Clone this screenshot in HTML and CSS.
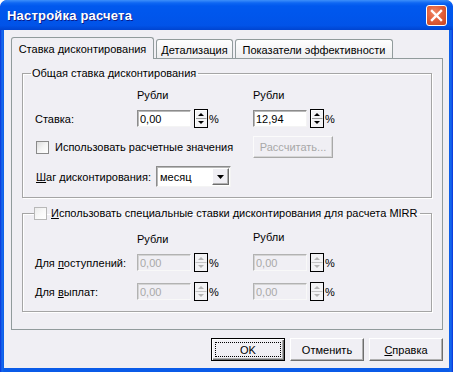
FILE: index.html
```html
<!DOCTYPE html>
<html lang="ru">
<head>
<meta charset="utf-8">
<title>Настройка расчета</title>
<link rel="stylesheet" href="styles.css">
</head>
<body>
<div class="window">
  <div class="titlebar">
    <span class="title">Настройка расчета</span>
    <span class="close">
      <svg width="13" height="13" viewBox="0 0 13 13"><path d="M2 2 L11 11 M11 2 L2 11" stroke="#fff" stroke-width="2.4" stroke-linecap="square"/></svg>
    </span>
  </div>
  <div class="client">
    <div class="tabs">
      <div class="tab active tab-a">Ставка дисконтирования</div>
      <div class="tab tab-b">Детализация</div>
      <div class="tab tab-c">Показатели эффективности</div>
    </div>
    <div class="panel">
      <fieldset class="group g1">
        <legend>Общая ставка дисконтирования</legend>
        <div class="gbody">
          <div class="row r-head">
            <span class="lbl"></span>
            <span class="cell">Рубли</span>
            <span class="cell">Рубли</span>
          </div>
          <div class="row r-field">
            <span class="lbl">Ставка:</span>
            <span class="cell">
              <input class="edit" type="text" value="0,00">
              <span class="spin"><svg width="14" height="19" viewBox="0 0 14 19"><rect x="0.5" y="0.5" width="13" height="18" fill="#f3f3f5" stroke="#000"/><path d="M1.5 9.5 H12.5" stroke="#9a9a9a"/><path d="M1.5 1.5 H12.5 M1.5 1.5 V17.5" stroke="#fff"/><path d="M4 7 L10 7 L7 4 Z" fill="#000"/><path d="M4 12 L10 12 L7 15 Z" fill="#000"/></svg></span>
              <span class="pct">%</span>
            </span>
            <span class="cell">
              <input class="edit" type="text" value="12,94">
              <span class="spin"><svg width="14" height="19" viewBox="0 0 14 19"><rect x="0.5" y="0.5" width="13" height="18" fill="#f3f3f5" stroke="#000"/><path d="M1.5 9.5 H12.5" stroke="#9a9a9a"/><path d="M1.5 1.5 H12.5 M1.5 1.5 V17.5" stroke="#fff"/><path d="M4 7 L10 7 L7 4 Z" fill="#000"/><path d="M4 12 L10 12 L7 15 Z" fill="#000"/></svg></span>
              <span class="pct">%</span>
            </span>
          </div>
          <div class="row r-check">
            <span class="checkwrap"><span class="chk"></span><span>Использовать расчетные значения</span></span>
            <span class="btn disabled calc">Рассчитать...</span>
          </div>
          <div class="row r-combo">
            <span class="lbl lbl-wide"><u>Ш</u>аг дисконтирования:</span>
            <span class="combo"><span class="combo-text">месяц</span><span class="combo-btn"><svg width="15" height="17" viewBox="0 0 15 17"><path d="M4 7 L11 7 L7.5 11 Z" fill="#000"/></svg></span></span>
          </div>
        </div>
      </fieldset>
      <fieldset class="group g2">
        <legend><span class="chk chk-light"></span><span><u>И</u>спользовать специальные ставки дисконтирования для расчета MIRR</span></legend>
        <div class="gbody">
          <div class="row r-head2">
            <span class="lbl"></span>
            <span class="cell">Рубли</span>
            <span class="cell up">Рубли</span>
          </div>
          <div class="row r-field2">
            <span class="lbl">Для <u>п</u>оступлений:</span>
            <span class="cell">
              <input class="edit" type="text" value="0,00" disabled>
              <span class="spin"><svg width="14" height="19" viewBox="0 0 14 19"><rect x="0.5" y="0.5" width="13" height="18" fill="#f3f3f5" stroke="#000"/><path d="M1.5 9.5 H12.5" stroke="#c4c4c4"/><path d="M4 7 L10 7 L7 4 Z" fill="#b5b5b5"/><path d="M4 12 L10 12 L7 15 Z" fill="#b5b5b5"/></svg></span>
              <span class="pct">%</span>
            </span>
            <span class="cell">
              <input class="edit" type="text" value="0,00" disabled>
              <span class="spin"><svg width="14" height="19" viewBox="0 0 14 19"><rect x="0.5" y="0.5" width="13" height="18" fill="#f3f3f5" stroke="#000"/><path d="M1.5 9.5 H12.5" stroke="#c4c4c4"/><path d="M4 7 L10 7 L7 4 Z" fill="#b5b5b5"/><path d="M4 12 L10 12 L7 15 Z" fill="#b5b5b5"/></svg></span>
              <span class="pct">%</span>
            </span>
          </div>
          <div class="row r-field3">
            <span class="lbl">Для <u>в</u>ыплат:</span>
            <span class="cell">
              <input class="edit" type="text" value="0,00" disabled>
              <span class="spin"><svg width="14" height="19" viewBox="0 0 14 19"><rect x="0.5" y="0.5" width="13" height="18" fill="#f3f3f5" stroke="#000"/><path d="M1.5 9.5 H12.5" stroke="#c4c4c4"/><path d="M4 7 L10 7 L7 4 Z" fill="#b5b5b5"/><path d="M4 12 L10 12 L7 15 Z" fill="#b5b5b5"/></svg></span>
              <span class="pct">%</span>
            </span>
            <span class="cell">
              <input class="edit" type="text" value="0,00" disabled>
              <span class="spin"><svg width="14" height="19" viewBox="0 0 14 19"><rect x="0.5" y="0.5" width="13" height="18" fill="#f3f3f5" stroke="#000"/><path d="M1.5 9.5 H12.5" stroke="#c4c4c4"/><path d="M4 7 L10 7 L7 4 Z" fill="#b5b5b5"/><path d="M4 12 L10 12 L7 15 Z" fill="#b5b5b5"/></svg></span>
              <span class="pct">%</span>
            </span>
          </div>
        </div>
      </fieldset>
    </div>
    <div class="buttons">
      <span class="btn default">OK</span>
      <span class="btn">Отменить</span>
      <span class="btn"><u>С</u>правка</span>
    </div>
  </div>
</div>
</body>
</html>
```

FILE: styles.css
```css
* { box-sizing: border-box; }
html, body { margin: 0; padding: 0; }
body {
  width: 453px;
  height: 372px;
  overflow: hidden;
  background: #ffffff;
  font-family: "Liberation Sans", Arial, sans-serif;
  font-size: 11px;
  color: #000;
}
u { text-decoration: underline; text-underline-offset: 1px; }

.window {
  width: 453px;
  height: 372px;
  display: flex;
  flex-direction: column;
  background: linear-gradient(to right, #0831d9 0, #166aee 2px, #0a5be8 4px, #0a5be8 calc(100% - 4px), #166aee calc(100% - 2px), #0831d9 100%);
  border-radius: 7px 7px 0 0;
  overflow: hidden;
}

.titlebar {
  flex: none;
  height: 30px;
  display: flex;
  align-items: center;
  justify-content: space-between;
  padding: 0 6px 0 7px;
  background: linear-gradient(to bottom, #3d8ffa 0, #0d66f3 3px, #0058ee 6px, #0056ec 50%, #0153e8 85%, #0044d0 100%);
  border-radius: 7px 7px 0 0;
}
.title {
  color: #fff;
  font-weight: bold;
  font-size: 13px;
  letter-spacing: 0.2px;
  text-shadow: 1px 1px 0 #0a1c8a;
  margin-top: 1px;
}
.close {
  width: 21px;
  height: 21px;
  border: 1px solid #fff;
  border-radius: 3px;
  display: flex;
  align-items: center;
  justify-content: center;
  background: radial-gradient(circle at 40% 35%, #f08a66 0, #e2603c 45%, #c8431e 100%);
  margin-top: 1px;
}

.client {
  flex: 1;
  margin: 0 4px 4px 4px;
  background: #f0eff4;
  padding: 7px 6px 7px 7px;
  display: flex;
  flex-direction: column;
}

.tabs {
  display: flex;
  align-items: flex-end;
  gap: 1px;
  height: 21px;
  position: relative;
  z-index: 1;
}
.tab {
  height: 19px;
  border: 1px solid #919b9c;
  border-bottom: none;
  border-radius: 3px 3px 0 0;
  background: linear-gradient(to bottom, #fefefe, #eeeef0);
  display: flex;
  align-items: center;
  justify-content: center;
  white-space: nowrap;
  padding-top: 1px;
}
.tab.active {
  height: 22px;
  margin-bottom: -1px;
  background: #f0eff4;
  padding-top: 0;
}
.tab-a { width: 143px; }
.tab-b { width: 77px; margin-left: 1px; }
.tab-c { width: 158px; margin-left: 1px; }

.panel {
  height: 272px;
  border: 1px solid #919b9c;
  background: #f0eff4;
  padding: 0 10px;
  display: flex;
  flex-direction: column;
}

.group {
  margin: 0;
  padding: 0 0 10px 8px;
  border: 1px solid #a5a5a5;
  box-shadow: inset 1px 1px 0 #ffffff, 1px 1px 0 #ffffff;
  min-width: 0;
}
.group legend {
  padding: 0 2px 0 1px;
  line-height: 13px;
  height: 13px;
  display: flex;
  align-items: center;
  gap: 4px;
  white-space: nowrap;
}
.g1 { margin-top: 8px; }
.g2 { margin-top: 9px; }
.g2 legend { margin-left: 3px; padding-left: 0; }

.gbody {
  padding-left: 4px;
  display: flex;
  flex-direction: column;
}
.row {
  display: flex;
  align-items: center;
}
.lbl { width: 102px; flex: none; white-space: nowrap; }
.lbl-wide { width: 121px; padding-left: 1px; }
.cell {
  width: 116px;
  flex: none;
  display: flex;
  align-items: center;
}
.r-head { height: 13px; margin-top: 8px; }
.r-field { height: 19px; margin-top: 8px; }
.r-check { height: 22px; margin-top: 8px; }
.r-combo { height: 21px; margin-top: 8px; }
.r-head2 { height: 13px; margin-top: 12px; }
.r-field2 { height: 19px; margin-top: 8px; }
.r-field3 { height: 19px; margin-top: 10px; }
.up { margin-top: -4px; }

.edit {
  width: 54px;
  height: 17px;
  margin: 0;
  padding: 0 2px;
  font: inherit;
  color: #000;
  background: #fff;
  border: 1px solid;
  border-color: #8c8c8c #f4f4f4 #f4f4f4 #8c8c8c;
  box-shadow: inset 1px 1px 0 #b8b8b8;
  outline: none;
}
.edit:disabled {
  background: #f0eff4;
  color: #a9a9a9;
  border-color: #b2b2b2 #f8f8f8 #f8f8f8 #b2b2b2;
  box-shadow: inset 1px 1px 0 #d4d4d4;
}
.spin {
  display: flex;
  margin-left: 3px;
  width: 14px;
  height: 19px;
}
.pct { margin-left: 1px; }

.checkwrap {
  width: 218px;
  flex: none;
  display: flex;
  align-items: center;
  gap: 6px;
  padding-left: 1px;
  white-space: nowrap;
}
.chk {
  width: 13px;
  height: 13px;
  flex: none;
  border: 1px solid #8a8a8a;
  background: linear-gradient(135deg, #dcdcdc 0, #f4f4f4 50%, #ffffff 100%);
}
.chk-light {
  border-color: #b8b8b8;
  background: linear-gradient(135deg, #ececec 0, #fafafa 60%, #ffffff 100%);
}

.btn {
  display: flex;
  align-items: center;
  justify-content: center;
  height: 23px;
  width: 74px;
  background: #f0eff4;
  border: 1px solid;
  border-color: #ffffff #6e6e6e #6e6e6e #ffffff;
  box-shadow: inset -1px -1px 0 #b0b0b0;
  white-space: nowrap;
  position: relative;
}
.btn.disabled {
  color: #a8a8a8;
  border-color: #fbfbfb #a8a8a8 #a8a8a8 #fbfbfb;
  box-shadow: inset -1px -1px 0 #d6d6d6;
}
.calc { width: 80px; height: 22px; }
.btn.default {
  border: 1px solid #000;
  box-shadow: inset 1px 1px 0 #fff, inset -1px -1px 0 #6e6e6e, inset -2px -2px 0 #b0b0b0;
}
.btn.default::after {
  content: "";
  position: absolute;
  inset: 3px;
  border: 1px dotted #000;
}

.combo {
  width: 75px;
  height: 21px;
  display: flex;
  align-items: center;
  background: #fff;
  border: 1px solid;
  border-color: #8c8c8c #f4f4f4 #f4f4f4 #8c8c8c;
  box-shadow: inset 1px 1px 0 #b8b8b8;
  padding: 1px 1px 1px 3px;
}
.combo-text { flex: 1; }
.combo-btn {
  width: 17px;
  height: 17px;
  display: flex;
  align-items: center;
  justify-content: center;
  background: #f0eff4;
  border: 1px solid;
  border-color: #ffffff #6e6e6e #6e6e6e #ffffff;
  box-shadow: inset -1px -1px 0 #b0b0b0;
}

.buttons {
  flex: none;
  margin-top: 8px;
  display: flex;
  justify-content: flex-end;
  gap: 5px;
}
```
